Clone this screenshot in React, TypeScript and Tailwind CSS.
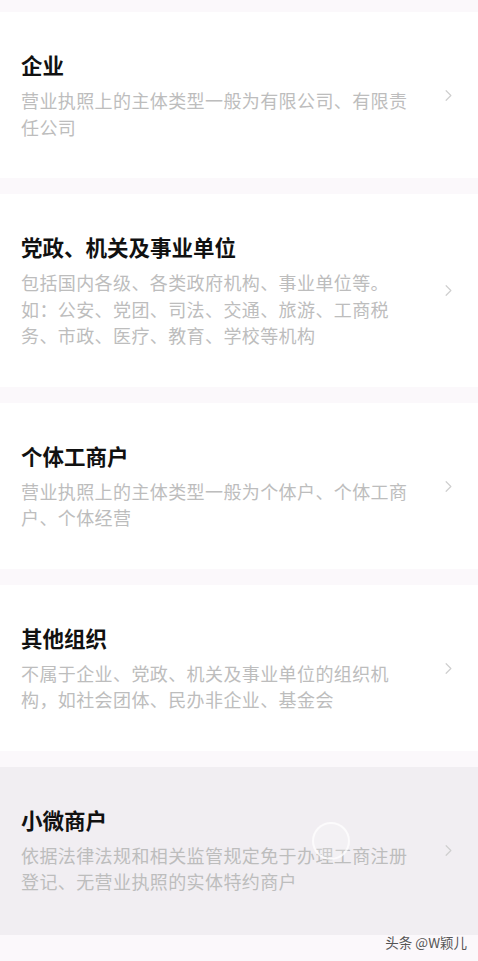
import { ChevronRight } from "lucide-react";

interface Item {
  title: string;
  desc: string;
  pressed?: boolean;
}

const items: Item[] = [
  { title: "企业", desc: "营业执照上的主体类型一般为有限公司、有限责任公司" },
  {
    title: "党政、机关及事业单位",
    desc: "包括国内各级、各类政府机构、事业单位等。如：公安、党团、司法、交通、旅游、工商税务、市政、医疗、教育、学校等机构",
  },
  { title: "个体工商户", desc: "营业执照上的主体类型一般为个体户、个体工商户、个体经营" },
  { title: "其他组织", desc: "不属于企业、党政、机关及事业单位的组织机构，如社会团体、民办非企业、基金会" },
  {
    title: "小微商户",
    desc: "依据法律法规和相关监管规定免于办理工商注册登记、无营业执照的实体特约商户",
    pressed: true,
  },
];

function Row({ title, desc, pressed }: Item) {
  return (
    <div
      className={
        "relative flex items-center justify-between pl-[21px] pr-[20px] pt-[39px] " +
        (pressed ? "bg-[#f1eef2] pb-[40px]" : "bg-white pb-[38px]")
      }
    >
      <div className="w-[392px]">
        <div className="text-[21.5px] leading-[28px] font-bold text-[#111111]">{title}</div>
        <div className="mt-[8px] text-[18px] leading-[26.5px] tracking-[0.4px] text-[#bdbdbd]">
          {desc}
        </div>
      </div>
      <ChevronRight className="w-[19px] h-[19px] text-[#cfcfcf]" strokeWidth={1.5} />
      {pressed && (
        <div className="absolute left-[312px] top-[55px] w-[38px] h-[38px] rounded-full border-2 border-white/70 bg-white/20" />
      )}
    </div>
  );
}

export default function App() {
  return (
    <div
      className="relative w-[478px] h-[961px] overflow-hidden bg-[#fbf8fb]"
      style={{ fontFamily: '"Noto Sans CJK SC", "Noto Sans", sans-serif' }}
    >
      <div className="flex flex-col gap-[16px] pt-[12px]">
        {items.map((it) => (
          <Row key={it.title} {...it} />
        ))}
      </div>
      <div className="absolute right-[11px] bottom-[9px] text-[13.5px] text-[#555555]">
        头条 @W颖儿
      </div>
    </div>
  );
}
